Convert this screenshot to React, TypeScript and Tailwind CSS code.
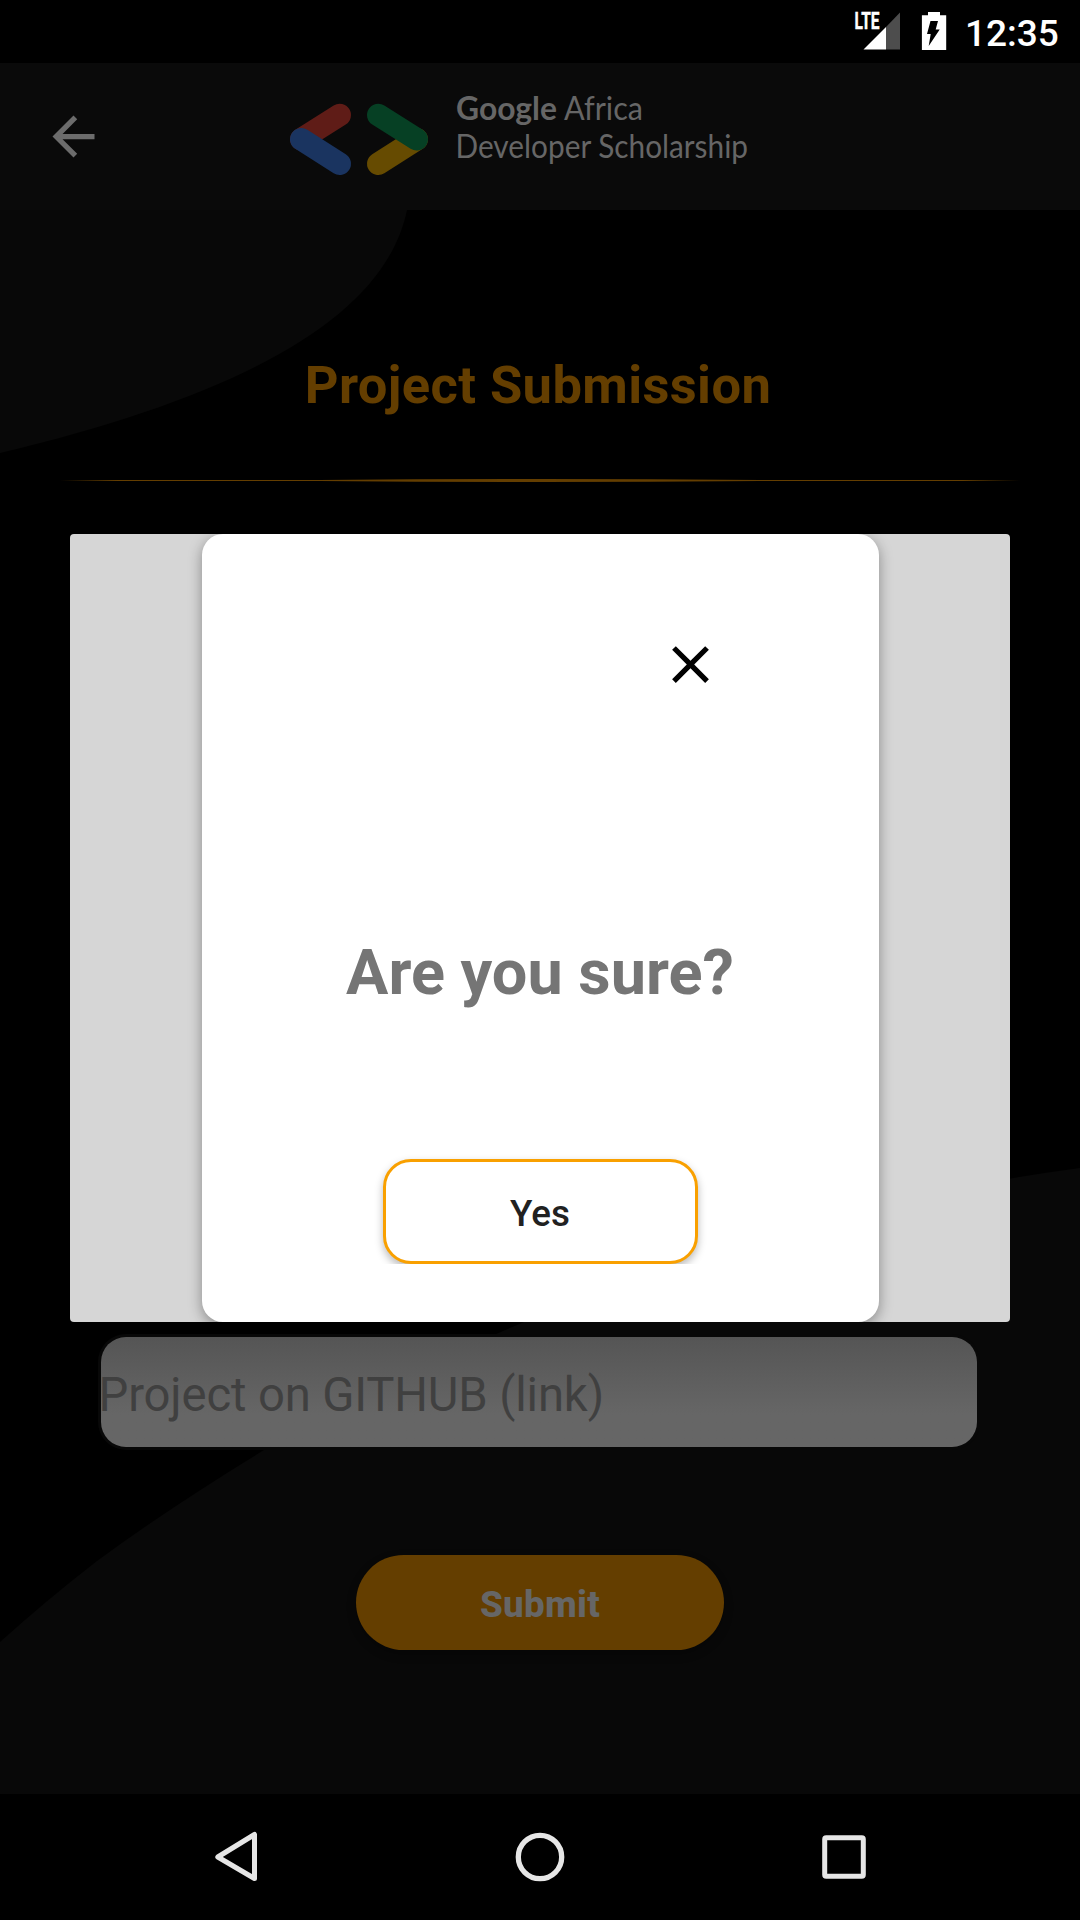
function StatusBar() {
  return (
    <div className="flex h-[63px] shrink-0 items-start justify-end bg-black pr-[21px] text-white">
      <svg className="h-[63px] w-[50px]" viewBox="852 0 50 63">
        <text x="854.500" y="29" fill="#fff" stroke="#fff" strokeWidth="0.400" fontFamily="Roboto" fontWeight="700" fontSize="23" textLength="25" lengthAdjust="spacingAndGlyphs">LTE</text>
        <path d="M900 12.500V49.500H886V27Z" fill="#4d4d4d" />
        <path d="M886 27V49.500H863.500Z" fill="#fff" />
      </svg>
      <svg className="ml-[18px] h-[63px] w-[28px]" viewBox="920 0 28 63">
        <path d="M928 12h12v3.300h6.200V50H921.900V15.300H928Z" fill="#fff" />
        <path d="M930.500 21h7.500l-2.300 8.500h4l-11 16.500 2-12h-3.700Z" fill="#000" />
      </svg>
      <span className="ml-[17px] mt-[4px] w-[94px] text-[37px] leading-[60px] font-medium">12:35</span>
    </div>
  );
}

function AppBar() {
  return (
    <header className="flex h-[147px] shrink-0 items-center bg-[#0a0a0a] pl-[42px]">
      <svg className="size-[63px]" viewBox="0 0 24 24" fill="#6c6c6c">
        <path d="M20 11H7.830l5.590-5.590L12 4l-8 8 8 8 1.410-1.410L7.830 13H20v-2z" />
      </svg>
      <svg className="ml-[165px] h-[110px] w-[500px]" viewBox="270 82 500 110" fill="none" strokeWidth="22.600" strokeLinecap="round">
        <path d="M339.700 115L301.300 139.300" stroke="#5f1c17" />
        <path d="M301.300 139.300L339.700 163.700" stroke="#1a3460" />
        <path d="M378.300 163.700L416.700 139.300" stroke="#664b01" />
        <path d="M378.300 115L416.700 139.300" stroke="#064024" />
        <g fill="#666" fontFamily="Lato" fontSize="32">
          <text x="456" y="119.500" fontWeight="700" textLength="101" lengthAdjust="spacingAndGlyphs">Google</text>
          <text x="564" y="119.500" textLength="79" lengthAdjust="spacingAndGlyphs">Africa</text>
          <text x="455.500" y="158" textLength="292.500" lengthAdjust="spacingAndGlyphs">Developer Scholarship</text>
        </g>
      </svg>
    </header>
  );
}

function Backdrop() {
  return (
    <svg className="absolute inset-0 size-full" viewBox="0 210 1080 1584" fill="#080808">
      <path d="M0 210H407C386 312 256 392 0 453Z" />
      <path d="M0 1642C30 1615 62 1588 97 1561C150 1522 205 1486 264 1450C345 1402 430 1362 524 1322C690 1253 880 1194 1080 1168V1794H0Z" />
    </svg>
  );
}

function Dialog() {
  return (
    <div className="absolute left-[70px] top-[324px] flex h-[788px] w-[940px] justify-center overflow-hidden rounded-[4px] bg-[#d6d6d6]">
      <div className="flex w-[677px] flex-col items-center rounded-[21px] bg-white shadow-[0_4px_14px_rgba(0,0,0,0.36)]">
        <svg className="mt-[99px] mr-[157px] size-[63px] self-end shrink-0" viewBox="0 0 24 24" fill="#000">
          <path d="M19 6.410L17.590 5 12 10.590 6.410 5 5 6.410 10.590 12 5 17.590 6.410 19 12 13.410 17.590 19 19 17.590 13.410 12z" />
        </svg>
        <h2 className="mt-[237px] text-[63px] leading-[80px] font-bold text-[#757575]">Are you sure?</h2>
        <div className="mt-[131px] overflow-hidden px-3 pt-[15px]">
          <button className="flex h-[105px] w-[315px] items-center justify-center rounded-[28px] border-3 border-[#f9a000] bg-white pt-[4px] text-[36.750px] leading-[44px] font-medium text-[#212121] shadow-[0_4px_8px_rgba(0,0,0,0.28)]">
            Yes
          </button>
        </div>
      </div>
    </div>
  );
}

function NavBar() {
  return (
    <nav className="flex h-[126px] shrink-0 items-center justify-between bg-black px-[204px]">
      <svg className="size-[64px]" viewBox="204 1825 64 64" fill="none" stroke="#e6e6e6" strokeWidth="5" strokeLinejoin="round">
        <path d="M254.500 1834.500V1878.500L217.800 1857Z" />
      </svg>
      <svg className="size-[64px]" viewBox="508 1825 64 64" fill="none" stroke="#e6e6e6" strokeWidth="5.300">
        <circle cx="540" cy="1857" r="21.700" />
      </svg>
      <svg className="size-[64px]" viewBox="812 1825 64 64" fill="none" stroke="#e6e6e6" strokeWidth="5">
        <rect x="824.700" y="1837.700" width="38.600" height="38.600" rx="1.500" />
      </svg>
    </nav>
  );
}

export default function App() {
  return (
    <div className="flex h-[1920px] w-[1080px] flex-col overflow-hidden bg-black font-['Roboto',sans-serif]">
      <StatusBar />
      <AppBar />
      <main className="relative h-[1584px] shrink-0">
        <Backdrop />
        <div className="relative flex flex-col items-center">
          <h1 className="mt-[145px] mr-1 text-[52.500px] leading-[60px] font-bold tracking-[0.380px] text-[#643e00]">Project Submission</h1>
          <svg className="mt-[62px] h-[7px] w-[960px]" viewBox="0 0 960 7">
            <defs>
              <linearGradient id="rule">
                <stop offset="0" stopColor="#643e00" stopOpacity="0" />
                <stop offset="0.060" stopColor="#643e00" />
                <stop offset="0.940" stopColor="#643e00" />
                <stop offset="1" stopColor="#643e00" stopOpacity="0" />
              </linearGradient>
            </defs>
            <path d="M0 3H260Q480 1 700 3H960V4H700Q480 6 260 4H0Z" fill="url(#rule)" />
          </svg>
          <div className="mt-[850px] mr-[2px] rounded-[28px] bg-[#080808] p-[3px]">
            <div className="flex h-[110px] w-[876px] items-center rounded-[25px] bg-linear-to-b from-[#555] to-[#666] to-70%">
              <span className="mt-[5px] -ml-[2.500px] text-[47.250px] leading-[56px] tracking-[-0.150px] text-[#404040]">Project on GITHUB (link)</span>
            </div>
          </div>
          <button className="mt-[105px] flex h-[95px] w-[368px] items-center justify-center rounded-full bg-[#643e00] pt-[4px] text-[36.750px] leading-[44px] font-extrabold tracking-[0.300px] text-[#666] shadow-[0_4px_10px_rgba(0,0,0,0.3)]">
            Submit
          </button>
        </div>
        <Dialog />
      </main>
      <NavBar />
    </div>
  );
}
